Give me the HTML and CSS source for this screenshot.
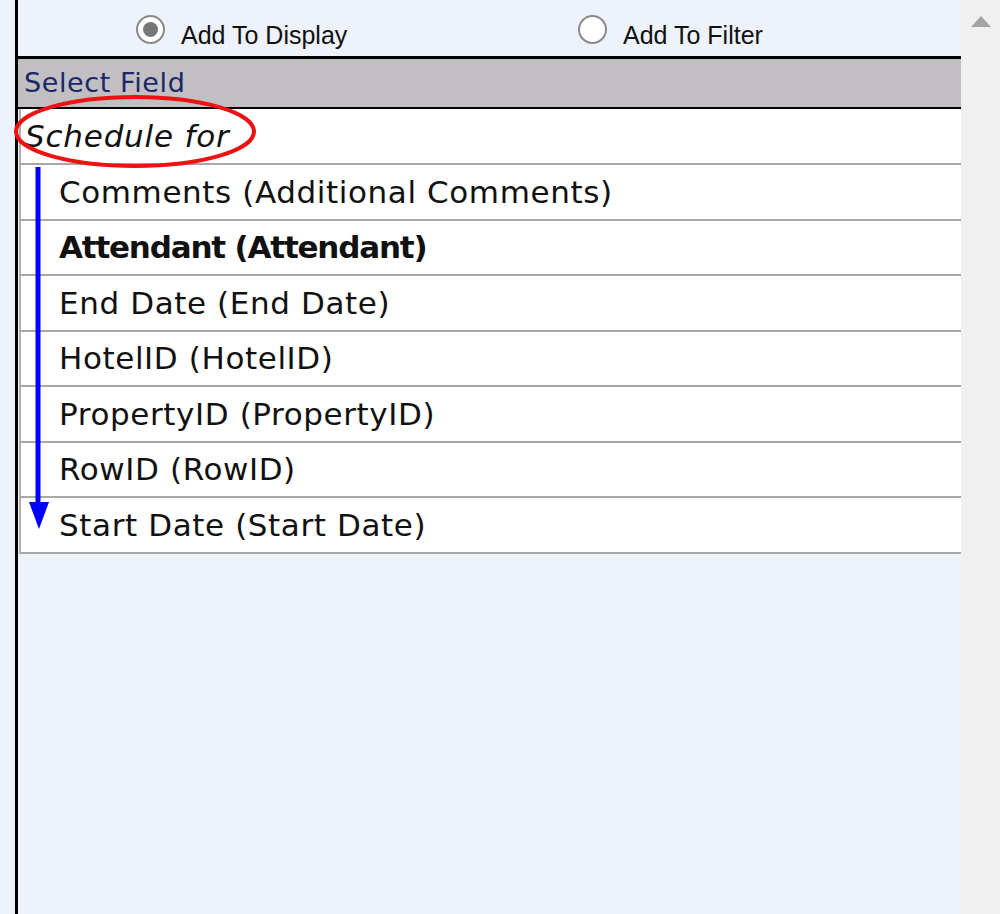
FILE: index.html
```html
<!DOCTYPE html>
<html>
<head>
<meta charset="utf-8">
<link rel="stylesheet" href="styles.css">
</head>
<body>
<div class="page">
  <div class="frame">
    <div class="radios">
      <label class="opt opt-first"><span class="radio checked"></span><span class="opt-text">Add To Display</span></label>
      <label class="opt"><span class="radio"></span><span class="opt-text">Add To Filter</span></label>
    </div>
    <div class="table">
      <div class="header">Select Field</div>
      <div class="group">Schedule for</div>
      <div class="row">Comments (Additional Comments)</div>
      <div class="row bold">Attendant (Attendant)</div>
      <div class="row">End Date (End Date)</div>
      <div class="row">HotelID (HotelID)</div>
      <div class="row">PropertyID (PropertyID)</div>
      <div class="row">RowID (RowID)</div>
      <div class="row">Start Date (Start Date)</div>
    </div>
  </div>
  <div class="scrollbar">
    <svg class="arrow-up" width="20" height="11" viewBox="0 0 20 11"><polygon points="10,0 20,11 0,11" fill="#a3a3a3"/></svg>
  </div>
  <svg class="annot" width="1000" height="914" viewBox="0 0 1000 914">
    <ellipse cx="135" cy="131.5" rx="119" ry="34.5" fill="none" stroke="#ee1111" stroke-width="4"/>
    <line x1="38" y1="167" x2="38" y2="505" stroke="#0000ff" stroke-width="5"/>
    <polygon points="29,502 49,502 39,529" fill="#0000ff"/>
  </svg>
</div>
</body>
</html>
```

FILE: styles.css
```css
html, body {
  margin: 0;
  padding: 0;
}
body {
  background: #eef2fa;
  font-family: "DejaVu Sans", "Open Sans", sans-serif;
}
.page {
  position: relative;
  display: flex;
  width: 1000px;
  height: 914px;
  overflow: hidden;
}
.frame {
  margin-left: 15px;
  width: 943px;
  border-left: 3px solid #000;
  background: #eef2fa;
  display: flex;
  flex-direction: column;
}
.radios {
  height: 56px;
  display: flex;
  align-items: flex-start;
  padding-left: 118px;
  font-family: "Liberation Sans", Arial, sans-serif;
  font-size: 25px;
  color: #111;
}
.opt {
  display: flex;
  align-items: flex-start;
}
.opt-first {
  width: 442px;
}
.radio {
  box-sizing: border-box;
  width: 29px;
  height: 29px;
  margin-top: 15px;
  border-radius: 50%;
  border: 2px solid #8a8a8a;
  background: #fff;
  position: relative;
}
.radio.checked::after {
  content: "";
  position: absolute;
  left: 5px;
  top: 5px;
  width: 15px;
  height: 15px;
  border-radius: 50%;
  background: #777;
}
.opt-text {
  margin-left: 16px;
  margin-top: 21px;
}
.table {
  display: flex;
  flex-direction: column;
}
.header {
  height: 48px;
  border-top: 3px solid #000;
  border-bottom: 2px solid #000;
  background: #c1bfc2;
  color: #1b2868;
  font-size: 27px;
  line-height: 48px;
  padding-left: 6px;
  letter-spacing: 0.6px;
}
.group, .row {
  box-sizing: border-box;
  height: 55.5px;
  margin-left: 1px;
  background: #fff;
  border-left: 2px solid #b0b0b0;
  border-bottom: 2px solid #a8a8a8;
  display: flex;
  align-items: center;
  color: #111;
  font-size: 31px;
  letter-spacing: 0.6px;
}
.group {
  height: 56px;
  font-style: italic;
  padding-left: 4px;
  letter-spacing: 0.8px;
}
.row {
  padding-left: 38px;
}
.row.bold {
  font-weight: bold;
  letter-spacing: -1.2px;
}
.scrollbar {
  width: 39px;
  height: 914px;
  background: #f0f0f0;
  display: flex;
  justify-content: center;
  align-items: flex-start;
}
.arrow-up {
  margin-top: 16px;
}
.annot {
  position: absolute;
  left: 0;
  top: 0;
  pointer-events: none;
}
```
